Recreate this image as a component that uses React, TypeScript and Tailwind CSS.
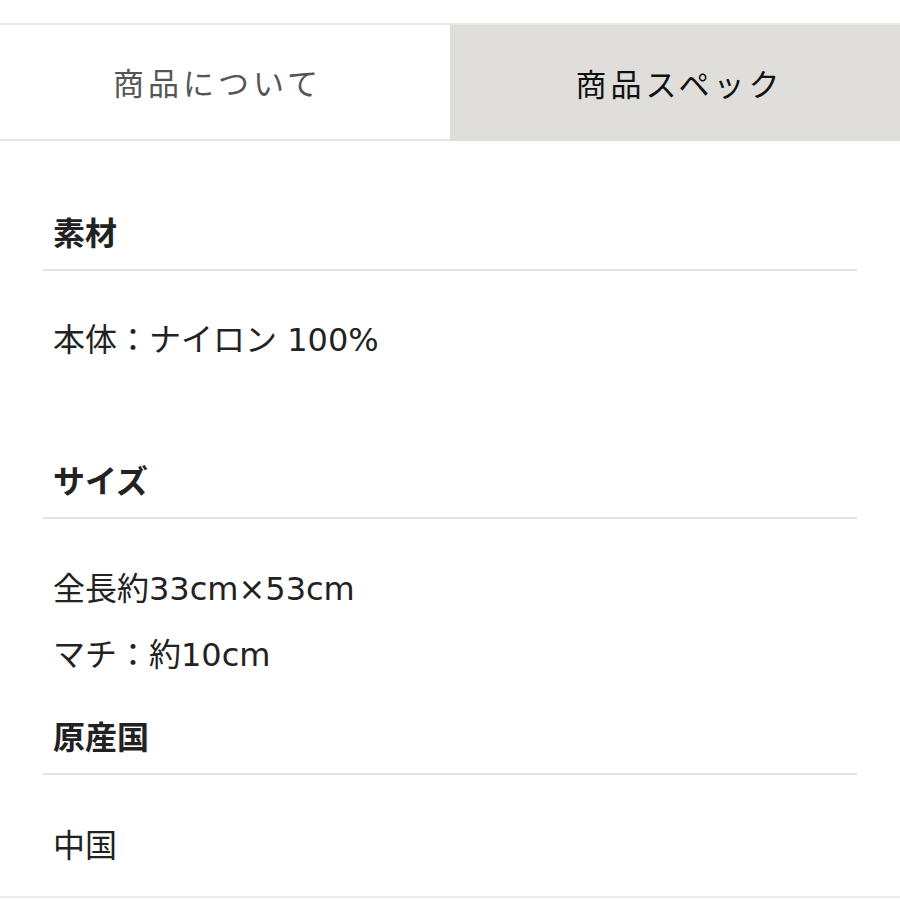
import React from 'react';

const font = { fontFamily: '"DejaVu Sans", "Noto Sans CJK JP", sans-serif' };
const tabFont = { fontFamily: '"Noto Sans CJK JP", "Noto Sans", sans-serif' };

export default function App() {
  return (
    <div className="w-[900px] h-[900px] bg-white text-[#222]" style={font}>
      <div className="pt-[23px]" style={tabFont}>
        <div className="flex border-t-2 border-[#e6e6e6]">
          <div className="w-[450px] h-[116px] flex items-center justify-center pr-[15px] border-b-2 border-[#e6e6e6] text-[31px] tracking-[4px] text-[#555]">
            商品について
          </div>
          <div className="w-[450px] h-[116px] flex items-center justify-center pl-[9px] bg-[#dfdedb] text-[31px] tracking-[4px] text-[#111]">
            商品スペック
          </div>
        </div>
      </div>

      <div className="px-[43px] text-[32px] leading-[48px]">
        <h2 className="pt-[69px] pl-[10px] font-bold">素材</h2>
        <div className="mt-[11px] border-t-2 border-[#e2e2e2]" />
        <p className="mt-[45px] pl-[10px]">本体：ナイロン 100%</p>

        <h2 className="mt-[94px] pl-[10px] font-bold">サイズ</h2>
        <div className="mt-[11px] border-t-2 border-[#e2e2e2]" />
        <p className="mt-[46px] pl-[10px]">全長約33cm×53cm</p>
        <p className="mt-[18px] pl-[10px]">マチ：約10cm</p>

        <h2 className="mt-[35px] pl-[10px] font-bold">原産国</h2>
        <div className="mt-[11px] border-t-2 border-[#e2e2e2]" />
        <p className="mt-[47px] pl-[10px]">中国</p>
      </div>
      <div className="mt-[26px] border-t-2 border-[#ececec]" />
    </div>
  );
}
